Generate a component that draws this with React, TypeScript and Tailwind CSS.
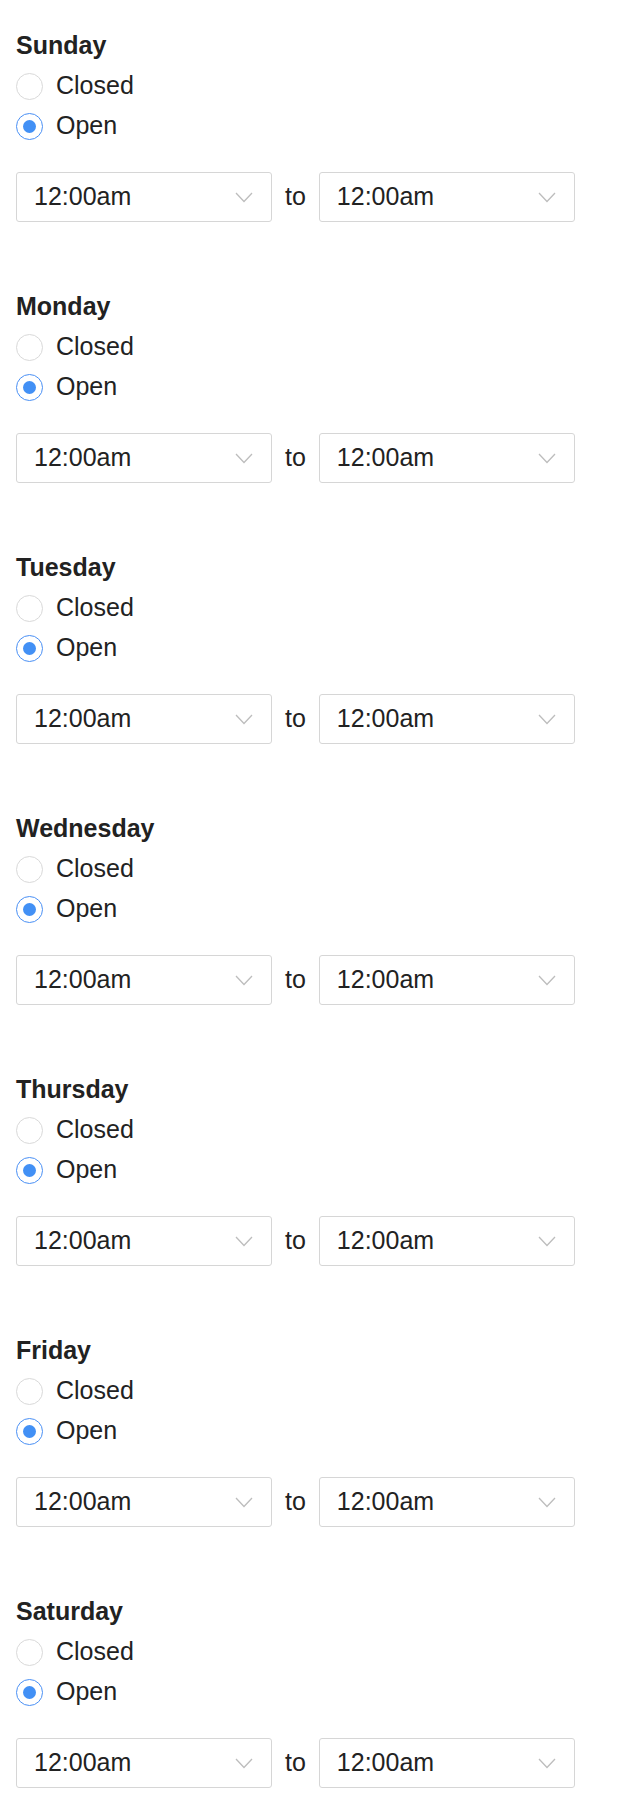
import React from "react";

const days = ["Sunday", "Monday", "Tuesday", "Wednesday", "Thursday", "Friday", "Saturday"];

function Chevron() {
  return (
    <svg width="18" height="11" viewBox="0 0 18 11" fill="none" className="shrink-0">
      <polyline points="1,1 9,9.5 17,1" stroke="#bdbdbd" strokeWidth="1.3" fill="none" />
    </svg>
  );
}

function Select() {
  return (
    <div className="flex items-center justify-between w-[256px] h-[50px] border border-[#d6d6d6] rounded-[3px] bg-white pl-[17px] pr-[18px]">
      <span className="text-[25px] text-[#222]">12:00am</span>
      <Chevron />
    </div>
  );
}

function Radio({ checked, label }: { checked: boolean; label: string }) {
  return (
    <div className="flex items-center h-[40px]">
      <div
        className={
          checked
            ? "w-[27px] h-[27px] rounded-full border border-[#4a90f5] flex items-center justify-center bg-white"
            : "w-[27px] h-[27px] rounded-full border border-[#d9d9d9] bg-white"
        }
      >
        {checked && <div className="w-[13px] h-[13px] rounded-full bg-[#4290f5]" />}
      </div>
      <span className="ml-[13px] text-[25px] text-[#222]">{label}</span>
    </div>
  );
}

function Day({ name }: { name: string }) {
  return (
    <div className="mb-[69px]">
      <div className="h-[32px] flex items-center text-[25px] font-bold text-[#222]">{name}</div>
      <div className="mt-[4px]">
        <Radio checked={false} label="Closed" />
        <Radio checked={true} label="Open" />
      </div>
      <div className="mt-[26px] flex items-center">
        <Select />
        <span className="mx-[13px] text-[25px] text-[#222]">to</span>
        <Select />
      </div>
    </div>
  );
}

export default function App() {
  return (
    <div
      className="w-[618px] min-h-[1806px] bg-white pl-[16px] pt-[30px]"
      style={{ fontFamily: '"Liberation Sans", Arial, Helvetica, sans-serif' }}
    >
      {days.map((d) => (
        <Day key={d} name={d} />
      ))}
    </div>
  );
}
